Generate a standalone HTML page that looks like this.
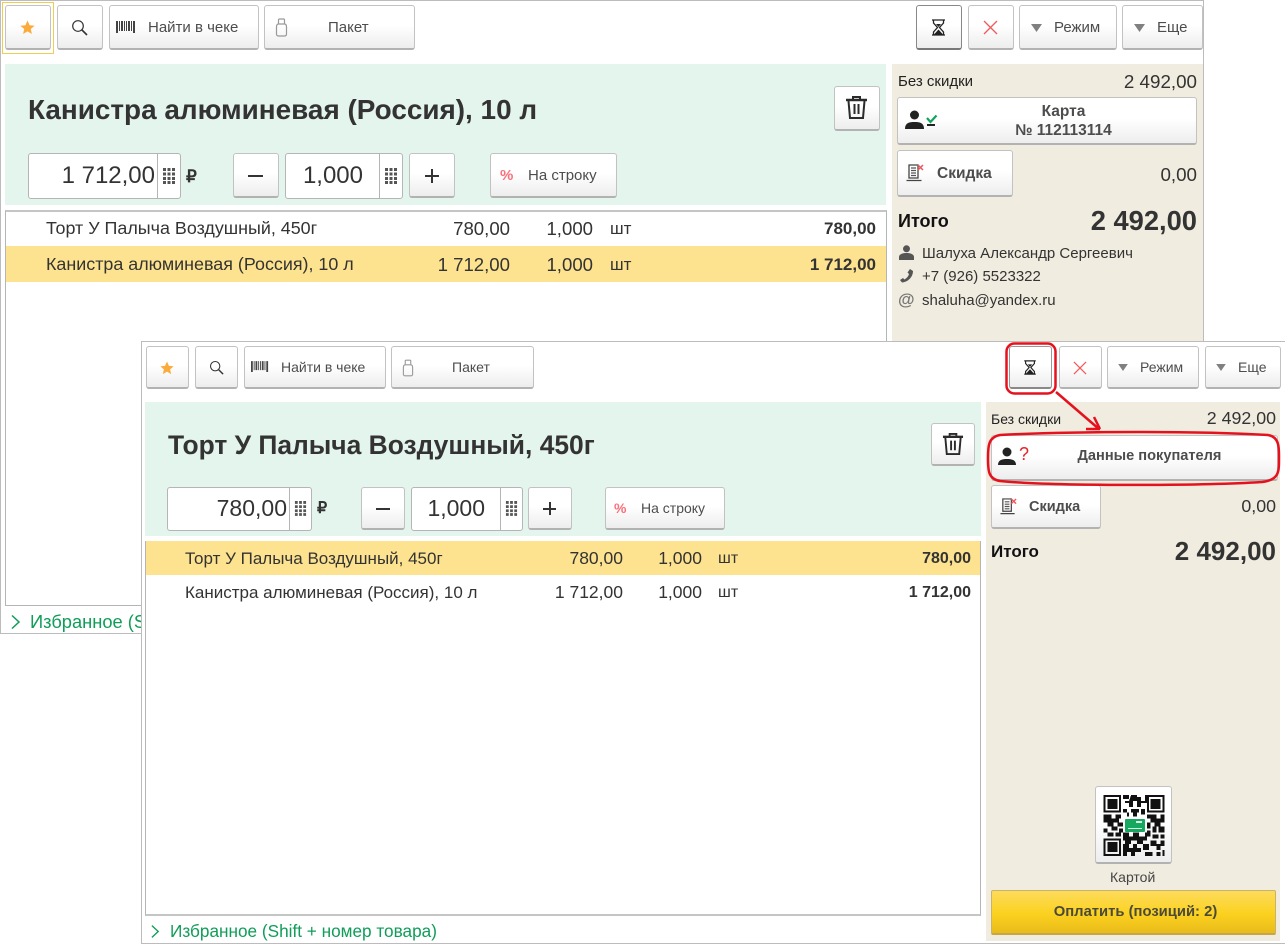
<!DOCTYPE html>
<html><head><meta charset="utf-8">
<style>
html,body{margin:0;padding:0;background:#fff;width:1285px;height:945px;overflow:hidden}
body{font-family:"Liberation Sans",sans-serif;color:#333;position:relative}
#w{position:absolute;left:0;top:0;width:1285px;height:945px;filter:blur(.3px)}
.a{position:absolute;white-space:nowrap;line-height:1}
.b{position:absolute;box-sizing:border-box;border:1px solid #c2c2c2;border-bottom:2px solid #b2b2b2;border-radius:3px;background:linear-gradient(#fff 0%,#fff 45%,#ededed 100%)}
.t{position:absolute;white-space:nowrap;line-height:1;color:#4d4d4d}
.i{position:absolute;box-sizing:border-box;background:#fff;border:1px solid #b5b5b5;border-radius:3px}
svg{position:absolute;overflow:visible}
.r{text-align:right}
.bd{font-weight:bold}
</style></head><body><div id="w">

<!-- WINDOW 1 -->
<div style="position:absolute;left:0;top:0;width:1204px;height:634px;box-sizing:border-box;border:1px solid #bcbcbc;background:#fff"></div>
<div style="position:absolute;left:2px;top:2px;width:52px;height:52px;box-sizing:border-box;border:1px solid #f0cc55"></div>
<div class="b" style="left:5px;top:5px;width:46px;height:45px"></div>
<svg style="left:20px;top:20px" width="15" height="15" viewBox="0 0 15 15"><path d="M7.5 0.5l2.1 4.7 5 .5-3.8 3.3 1.1 5-4.4-2.6-4.4 2.6 1.1-5L.4 5.7l5-.5z" fill="#fbaa3c"/></svg>
<div class="b" style="left:57px;top:5px;width:46px;height:45px"></div>
<svg style="left:71px;top:19px" width="17" height="17" viewBox="0 0 17 17" fill="none" stroke="#333"><circle cx="7" cy="7" r="5.3" stroke-width="1.2"/><path d="M11 11l5 5" stroke-width="1.6"/></svg>
<div class="b" style="left:109px;top:5px;width:150px;height:45px"></div>
<svg style="left:116px;top:21px" width="20" height="13" viewBox="0 0 20 13" fill="#444"><path d="M0 0h2v12H0zM3 0h1v10H3zM5 0h2v10H5zM8 0h1v10H8zM10 0h1v10h-1zM12 0h2v10h-2zM15 0h1v10h-1zM17 0h2v12h-2z"/></svg>
<div class="t" style="left:148px;top:20px;font-size:15px">Найти в чеке</div>
<div class="b" style="left:264px;top:5px;width:151px;height:45px"></div>
<svg style="left:275px;top:18px" width="13" height="19" viewBox="0 0 13 19" fill="none" stroke="#999" stroke-width="1.2"><path d="M1.500 9q0-3 2-3h6q2 0 2 3v7q0 2-2 2h-6q-2 0-2-2zM3.500 6V2q0-1 1-1h4q1 0 1 1v4"/></svg>
<div class="t" style="left:328px;top:20px;font-size:15px">Пакет</div>

<div class="b" style="left:916px;top:5px;width:46px;height:45px;border-color:#888;border-bottom-color:#777"></div>
<svg style="left:931px;top:19px" width="15" height="17" viewBox="0 0 15 17"><path d="M1 1h13M1 16h13M2.500 1v3l4 4.500-4 4.500v3M12.500 1v3l-4 4.500 4 4.500v3" fill="none" stroke="#222" stroke-width="1.300"/><path d="M3 15.500l4.500-5 4.500 5zM5 5h5l-2.500 3z" fill="#222"/></svg>
<div class="b" style="left:968px;top:5px;width:46px;height:45px"></div>
<svg style="left:983px;top:20px" width="15" height="15" viewBox="0 0 15 15"><path d="M1 1l13 13M14 1L1 14" stroke="#ef5a5a" stroke-width="1.300"/></svg>
<div class="b" style="left:1019px;top:5px;width:98px;height:45px"></div>
<svg style="left:1031px;top:24px" width="11" height="8" viewBox="0 0 11 8"><path d="M0 0h11L5.500 8z" fill="#808080"/></svg>
<div class="t" style="left:1054px;top:20px;font-size:15px">Режим</div>
<div class="b" style="left:1122px;top:5px;width:81px;height:45px"></div>
<svg style="left:1134px;top:24px" width="11" height="8" viewBox="0 0 11 8"><path d="M0 0h11L5.500 8z" fill="#808080"/></svg>
<div class="t" style="left:1157px;top:20px;font-size:15px">Еще</div>

<div style="position:absolute;left:5px;top:64px;width:881px;height:141px;background:#e4f5ed"></div>
<div class="a bd" style="left:28px;top:96px;font-size:27.9px">Канистра алюминевая (Россия), 10 л</div>
<div class="b" style="left:834px;top:86px;width:46px;height:45px"></div>
<svg style="left:845px;top:96px" width="23" height="24" viewBox="0 0 23 24" fill="none" stroke="#2b2b2b"><path d="M1 4h21" stroke-width="2.500"/><path d="M8 3V1h7v2" stroke-width="2"/><path d="M3.500 5l1.500 17h13l1.500-17" stroke-width="2"/><path d="M9.500 8v10M13.500 8v10" stroke-width="2"/></svg>

<div class="i" style="left:28px;top:153px;width:153px;height:46px"></div>
<div style="position:absolute;left:157px;top:153px;width:1px;height:46px;background:#b5b5b5"></div>
<div class="a r" style="left:28px;width:127px;top:164px;font-size:24px">1 712,00</div>
<svg style="left:162px;top:167px" width="14" height="17" viewBox="0 0 14 17" fill="#555"><path d="M1 1h3v3H1zM5.500 1h3v3h-3zM10 1h3v3h-3zM1 5.500h3v3H1zM5.500 5.500h3v3h-3zM10 5.500h3v3h-3zM1 10h3v3H1zM5.500 10h3v3h-3zM10 10h3v3h-3zM1 14h3v3H1zM5.500 14h3v3h-3zM10 14h3v3h-3z"/></svg>
<div class="a bd" style="left:186px;top:168px;font-size:17px">₽</div>
<div class="b" style="left:233px;top:153px;width:46px;height:45px"></div>
<div style="position:absolute;left:248px;top:175px;width:15px;height:2px;background:#333"></div>
<div class="i" style="left:285px;top:153px;width:118px;height:46px"></div>
<div style="position:absolute;left:379px;top:153px;width:1px;height:46px;background:#b5b5b5"></div>
<div class="a r" style="left:285px;width:78px;top:164px;font-size:24px">1,000</div>
<svg style="left:384px;top:167px" width="14" height="17" viewBox="0 0 14 17" fill="#555"><path d="M1 1h3v3H1zM5.500 1h3v3h-3zM10 1h3v3h-3zM1 5.500h3v3H1zM5.500 5.500h3v3h-3zM10 5.500h3v3h-3zM1 10h3v3H1zM5.500 10h3v3h-3zM10 10h3v3h-3zM1 14h3v3H1zM5.500 14h3v3h-3zM10 14h3v3h-3z"/></svg>
<div class="b" style="left:409px;top:153px;width:46px;height:45px"></div>
<div style="position:absolute;left:425px;top:175px;width:14px;height:2px;background:#333"></div>
<div style="position:absolute;left:431px;top:169px;width:2px;height:14px;background:#333"></div>
<div class="b" style="left:490px;top:153px;width:127px;height:45px"></div>
<div class="a bd" style="left:500px;top:168px;font-size:15px;color:#fb6f7b">%</div>
<div class="t" style="left:528px;top:168px;font-size:15px">На строку</div>

<div style="position:absolute;left:5px;top:210px;width:882px;height:396px;box-sizing:border-box;border:1px solid #b5b5b5;border-top:2px solid #c5c5c5;background:#fff"></div>
<div style="position:absolute;left:6px;top:246px;width:880px;height:36px;background:#fde38f"></div>
<div class="a" style="left:46px;top:220px;font-size:17.9px">Торт У Палыча Воздушный, 450г</div>
<div class="a r" style="left:380px;width:130px;top:220px;font-size:18.6px">780,00</div>
<div class="a r" style="left:500px;width:93px;top:220px;font-size:18.6px">1,000</div>
<div class="a" style="left:610px;top:220px;font-size:17px">шт</div>
<div class="a r bd" style="left:740px;width:136px;top:220px;font-size:17px">780,00</div>
<div class="a" style="left:46px;top:256px;font-size:17.9px">Канистра алюминевая (Россия), 10 л</div>
<div class="a r" style="left:380px;width:130px;top:256px;font-size:18.6px">1 712,00</div>
<div class="a r" style="left:500px;width:93px;top:256px;font-size:18.6px">1,000</div>
<div class="a" style="left:610px;top:256px;font-size:17px">шт</div>
<div class="a r bd" style="left:740px;width:136px;top:256px;font-size:17px">1 712,00</div>

<svg style="left:11px;top:614px" width="10" height="16" viewBox="0 0 10 16"><path d="M1 1.500l7 6.500-7 6.500" fill="none" stroke="#0f9d58" stroke-width="1.500"/></svg>
<div class="a" style="left:30px;top:613px;font-size:18.3px;color:#0f9d58">Избранное (Shift</div>

<div style="position:absolute;left:892px;top:64px;width:311px;height:278px;background:#f1ece0"></div>
<div class="a" style="left:898px;top:74px;font-size:15px;color:#222">Без скидки</div>
<div class="a r" style="left:1050px;width:147px;top:73px;font-size:18.8px">2 492,00</div>
<div class="b" style="left:897px;top:97px;width:300px;height:48px"></div>
<svg style="left:905px;top:110px" width="34" height="21" viewBox="0 0 34 21"><circle cx="9.500" cy="5" r="4.500" fill="#222"/><path d="M0 19c0-6 4-7 9.500-7s9.500 1 9.500 7z" fill="#222"/><path d="M22 8l3.500 4 6-6.500" fill="none" stroke="#0fa45b" stroke-width="2.200"/><path d="M22 15h8" stroke="#222" stroke-width="2"/></svg>
<div class="t bd" style="left:945px;width:237px;text-align:center;top:104px;font-size:15.5px">Карта</div>
<div class="t bd" style="left:945px;width:237px;text-align:center;top:123px;font-size:15.5px">№ 112113114</div>
<div class="b" style="left:897px;top:150px;width:116px;height:47px"></div>
<svg style="left:906px;top:164px" width="18" height="18" viewBox="0 0 18 18"><path d="M3 1h9v13H3zM0.500 16.500h15" fill="none" stroke="#444" stroke-width="1.300"/><path d="M5 4h5M5 6.500h5M5 9h5M5 11.500h5" stroke="#555" stroke-width="1.200"/><path d="M12 1l5 5M17 1l-5 5" stroke="#f0565f" stroke-width="1.500"/></svg>
<div class="t bd" style="left:937px;top:166px;font-size:15.5px">Скидка</div>
<div class="a r" style="left:1050px;width:147px;top:166px;font-size:18.8px">0,00</div>
<div class="a bd" style="left:898px;top:212px;font-size:18px;color:#111">Итого</div>
<div class="a r bd" style="left:1000px;width:197px;top:207px;font-size:27.3px">2 492,00</div>
<svg style="left:899px;top:245px" width="15" height="15" viewBox="0 0 15 15"><circle cx="7.500" cy="3.800" r="3.500" fill="#555"/><path d="M0 15v-3c0-3 4-4 7.500-4s7.500 1 7.500 4v3z" fill="#555"/></svg>
<div class="a" style="left:922px;top:246px;font-size:15px">Шалуха Александр Сергеевич</div>
<svg style="left:899px;top:268px" width="15" height="15" viewBox="0 0 15 15"><path d="M11 1l3 2c0 6-5 11-11 11.500L1 12l3-2 1.500 1.500C8 10 9.500 8 10 6L8.500 4.500z" fill="#555"/></svg>
<div class="a" style="left:922px;top:269px;font-size:15px">+7 (926) 5523322</div>
<div class="a bd" style="left:898px;top:291px;font-size:17px;color:#777">@</div>
<div class="a" style="left:922px;top:293px;font-size:15px">shaluha@yandex.ru</div>

<!-- WINDOW 2 -->
<div style="position:absolute;left:141px;top:341px;width:1144px;height:603px;box-sizing:border-box;border:1px solid #bcbcbc;border-right:none;background:#fff"></div>
<div class="b" style="left:146px;top:346px;width:43px;height:43px"></div>
<svg style="left:160px;top:361px" width="14" height="14" viewBox="0 0 15 15"><path d="M7.500 0.500l2.100 4.700 5 .5-3.800 3.300 1.100 5-4.400-2.600-4.400 2.600 1.100-5L.4 5.700l5-.5z" fill="#fbaa3c"/></svg>
<div class="b" style="left:195px;top:346px;width:43px;height:43px"></div>
<svg style="left:209px;top:360px" width="15" height="15" viewBox="0 0 17 17" fill="none" stroke="#333"><circle cx="7" cy="7" r="5.300" stroke-width="1.200"/><path d="M11 11l5 5" stroke-width="1.600"/></svg>
<div class="b" style="left:244px;top:346px;width:142px;height:43px"></div>
<svg style="left:251px;top:361px" width="18" height="12" viewBox="0 0 20 13" fill="#444"><path d="M0 0h2v12H0zM3 0h1v10H3zM5 0h2v10H5zM8 0h1v10H8zM10 0h1v10h-1zM12 0h2v10h-2zM15 0h1v10h-1zM17 0h2v12h-2z"/></svg>
<div class="t" style="left:281px;top:360px;font-size:14px">Найти в чеке</div>
<div class="b" style="left:391px;top:346px;width:143px;height:43px"></div>
<svg style="left:402px;top:359px" width="12" height="18" viewBox="0 0 13 19" fill="none" stroke="#999" stroke-width="1.200"><path d="M1.500 9q0-3 2-3h6q2 0 2 3v7q0 2-2 2h-6q-2 0-2-2zM3.500 6V2q0-1 1-1h4q1 0 1 1v4"/></svg>
<div class="t" style="left:452px;top:360px;font-size:14px">Пакет</div>
<div class="b" style="left:1009px;top:346px;width:43px;height:43px;border-color:#999;border-bottom-color:#888"></div>
<svg style="left:1023px;top:360px" width="14" height="15" viewBox="0 0 15 17"><path d="M1 1h13M1 16h13M2.500 1v3l4 4.500-4 4.500v3M12.500 1v3l-4 4.500 4 4.500v3" fill="none" stroke="#222" stroke-width="1.300"/><path d="M3 15.500l4.500-5 4.500 5zM5 5h5l-2.500 3z" fill="#222"/></svg>
<div class="b" style="left:1059px;top:346px;width:43px;height:43px"></div>
<svg style="left:1073px;top:361px" width="14" height="14" viewBox="0 0 15 15"><path d="M1 1l13 13M14 1L1 14" stroke="#ef5a5a" stroke-width="1.300"/></svg>
<div class="b" style="left:1107px;top:346px;width:92px;height:43px"></div>
<svg style="left:1118px;top:364px" width="10" height="7" viewBox="0 0 11 8"><path d="M0 0h11L5.500 8z" fill="#808080"/></svg>
<div class="t" style="left:1140px;top:360px;font-size:14px">Режим</div>
<div class="b" style="left:1205px;top:346px;width:76px;height:43px"></div>
<svg style="left:1216px;top:364px" width="10" height="7" viewBox="0 0 11 8"><path d="M0 0h11L5.500 8z" fill="#808080"/></svg>
<div class="t" style="left:1238px;top:360px;font-size:14px">Еще</div>

<div style="position:absolute;left:145px;top:402px;width:836px;height:134px;background:#e4f5ed"></div>
<div class="a bd" style="left:168px;top:432px;font-size:26.4px">Торт У Палыча Воздушный, 450г</div>
<div class="b" style="left:931px;top:423px;width:44px;height:43px"></div>
<svg style="left:942px;top:433px" width="22" height="23" viewBox="0 0 23 24" fill="none" stroke="#2b2b2b"><path d="M1 4h21" stroke-width="2.500"/><path d="M8 3V1h7v2" stroke-width="2"/><path d="M3.500 5l1.500 17h13l1.500-17" stroke-width="2"/><path d="M9.500 8v10M13.500 8v10" stroke-width="2"/></svg>

<div class="i" style="left:167px;top:487px;width:145px;height:44px"></div>
<div style="position:absolute;left:289px;top:487px;width:1px;height:44px;background:#b5b5b5"></div>
<div class="a r" style="left:167px;width:120px;top:497px;font-size:23px">780,00</div>
<svg style="left:294px;top:500px" width="13" height="16" viewBox="0 0 14 17" fill="#555"><path d="M1 1h3v3H1zM5.500 1h3v3h-3zM10 1h3v3h-3zM1 5.500h3v3H1zM5.500 5.500h3v3h-3zM10 5.500h3v3h-3zM1 10h3v3H1zM5.500 10h3v3h-3zM10 10h3v3h-3zM1 14h3v3H1zM5.500 14h3v3h-3zM10 14h3v3h-3z"/></svg>
<div class="a bd" style="left:317px;top:501px;font-size:16px">₽</div>
<div class="b" style="left:361px;top:487px;width:44px;height:43px"></div>
<div style="position:absolute;left:376px;top:508px;width:14px;height:2px;background:#333"></div>
<div class="i" style="left:411px;top:487px;width:112px;height:44px"></div>
<div style="position:absolute;left:500px;top:487px;width:1px;height:44px;background:#b5b5b5"></div>
<div class="a r" style="left:411px;width:74px;top:497px;font-size:23px">1,000</div>
<svg style="left:505px;top:500px" width="13" height="16" viewBox="0 0 14 17" fill="#555"><path d="M1 1h3v3H1zM5.500 1h3v3h-3zM10 1h3v3h-3zM1 5.500h3v3H1zM5.500 5.500h3v3h-3zM10 5.500h3v3h-3zM1 10h3v3H1zM5.500 10h3v3h-3zM10 10h3v3h-3zM1 14h3v3H1zM5.500 14h3v3h-3zM10 14h3v3h-3z"/></svg>
<div class="b" style="left:528px;top:487px;width:44px;height:43px"></div>
<div style="position:absolute;left:543px;top:508px;width:13px;height:2px;background:#333"></div>
<div style="position:absolute;left:549px;top:502px;width:2px;height:13px;background:#333"></div>
<div class="b" style="left:605px;top:487px;width:120px;height:43px"></div>
<div class="a bd" style="left:614px;top:501px;font-size:14px;color:#fb6f7b">%</div>
<div class="t" style="left:641px;top:501px;font-size:14px">На строку</div>

<div style="position:absolute;left:145px;top:541px;width:836px;height:375px;box-sizing:border-box;border:1px solid #b5b5b5;border-bottom:2px solid #c5c5c5;background:#fff"></div>
<div style="position:absolute;left:146px;top:541px;width:834px;height:34px;background:#fde38f"></div>
<div class="a" style="left:185px;top:550px;font-size:17px">Торт У Палыча Воздушный, 450г</div>
<div class="a r" style="left:500px;width:123px;top:550px;font-size:17.5px">780,00</div>
<div class="a r" style="left:600px;width:102px;top:550px;font-size:17.5px">1,000</div>
<div class="a" style="left:718px;top:551px;font-size:16px">шт</div>
<div class="a r bd" style="left:840px;width:131px;top:551px;font-size:16px">780,00</div>
<div class="a" style="left:185px;top:584px;font-size:17px">Канистра алюминевая (Россия), 10 л</div>
<div class="a r" style="left:500px;width:123px;top:584px;font-size:17.5px">1 712,00</div>
<div class="a r" style="left:600px;width:102px;top:584px;font-size:17.5px">1,000</div>
<div class="a" style="left:718px;top:585px;font-size:16px">шт</div>
<div class="a r bd" style="left:840px;width:131px;top:585px;font-size:16px">1 712,00</div>

<svg style="left:151px;top:924px" width="9" height="15" viewBox="0 0 10 16"><path d="M1 1.500l7 6.500-7 6.500" fill="none" stroke="#0f9d58" stroke-width="1.500"/></svg>
<div class="a" style="left:170px;top:923px;font-size:17.2px;color:#0f9d58">Избранное (Shift + номер товара)</div>

<div style="position:absolute;left:986px;top:402px;width:294px;height:539px;background:#f1ece0"></div>
<div class="a" style="left:991px;top:412px;font-size:14px;color:#222">Без скидки</div>
<div class="a r" style="left:1130px;width:146px;top:410px;font-size:17.8px">2 492,00</div>
<div class="b" style="left:991px;top:435px;width:287px;height:46px"></div>
<svg style="left:998px;top:445px" width="32" height="22" viewBox="0 0 32 22"><circle cx="9" cy="7" r="4.500" fill="#222"/><path d="M0 20c0-5 4-6 9-6s9 1 9 6z" fill="#222"/></svg>
<div class="a" style="left:1019px;top:445px;font-size:18px;color:#e8212b">?</div>
<div class="t bd" style="left:1030px;width:239px;text-align:center;top:449px;font-size:14.6px">Данные покупателя</div>
<div class="b" style="left:991px;top:485px;width:110px;height:44px"></div>
<svg style="left:1000px;top:498px" width="17" height="17" viewBox="0 0 18 18"><path d="M3 1h9v13H3zM0.500 16.500h15" fill="none" stroke="#444" stroke-width="1.300"/><path d="M5 4h5M5 6.500h5M5 9h5M5 11.500h5" stroke="#555" stroke-width="1.200"/><path d="M12 1l5 5M17 1l-5 5" stroke="#f0565f" stroke-width="1.500"/></svg>
<div class="t bd" style="left:1029px;top:500px;font-size:14.5px">Скидка</div>
<div class="a r" style="left:1130px;width:146px;top:498px;font-size:17.8px">0,00</div>
<div class="a bd" style="left:991px;top:543px;font-size:17px;color:#111">Итого</div>
<div class="a r bd" style="left:1080px;width:196px;top:538px;font-size:26px">2 492,00</div>

<div class="b" style="left:1095px;top:786px;width:77px;height:78px"></div>
<svg style="left:1103px;top:795px" width="62" height="61" viewBox="0 0 31 31" shape-rendering="crispEdges" fill="#111">
<path d="M0 0h9v9H0zM1 1v7h7V1zM2 2h5v5H2zM22 0h9v9h-9zM23 1v7h7V1zM24 2h5v5h-5zM0 22h9v9H0zM1 23v7h7v-7zM2 24h5v5H2z" fill-rule="evenodd"/>
<path d="M10 0h3v2h-3zM14 0h3v1h2v2h2V0h1v4h-3v2h-2V3h-2v3h-2V4h-2V3h2zM10 7h2v2h-2zM14 7h4v2h-4zM19 7h2v3h-2zM12 9h1v2h-1zM15 9h2v2h-2z"/>
<path d="M0 10h4v2h2v-2h3v2H8v2h2v2H7v-2H5v2h2v2H4v-2H2v-2H0zM0 17h2v2h3v2H2v-2H0zM6 19h3v2H6zM8 17h2v2H8z"/>
<path d="M22 10h5v2h2v-2h2v4h-2v2h2v3h-3v-3h-2v-2h-2v-2h-2zM22 14h2v3h-2zM25 16h2v3h-2zM22 18h2v3h-2zM25 20h3v2h-3zM29 20h2v2h-2z"/>
<path d="M10 19h3v2h2v-2h3v2h3v-2h1v4h-2v2h-3v-2h-3v2h-3v-2h-1zM10 25h3v2h2v-2h2v2h2v2h-3v2h-2v-2h-2v2h-2zM20 25h3v3h-3zM24 23h3v2h2v-2h2v3h-2v2h-2v-2h-3zM21 29h4v2h-4zM27 29h2v2h-2zM30 28h1v3h-1z"/>
<rect x="10.500" y="11" width="11" height="8" fill="#fff"/>
</svg>
<div style="position:absolute;left:1125px;top:819px;width:20px;height:13px;background:#17a85f;border-radius:1px"></div>
<div style="position:absolute;left:1136px;top:821px;width:6px;height:2px;background:#d9f2e5"></div>
<div style="position:absolute;left:1128px;top:828px;width:14px;height:1px;background:#d9f2e5"></div>
<div class="a" style="left:1110px;top:870px;font-size:14px;color:#444">Картой</div>
<div style="position:absolute;box-sizing:border-box;left:991px;top:890px;width:285px;height:45px;border:1px solid #c9b36a;border-bottom:2px solid #c5a64a;border-radius:2px;background:linear-gradient(#fddb5c 0%,#fbd11f 55%,#e9bb1a 100%)"></div>
<div class="a bd" style="left:993px;width:285px;text-align:center;top:905px;font-size:14.8px;color:#4a4a3a">Оплатить (позиций: 2)</div>

<!-- RED ANNOTATIONS -->
<svg style="left:0;top:0" width="1285" height="945" viewBox="0 0 1285 945" fill="none" stroke="#e5121e" stroke-width="2.500">
<rect x="1006.500" y="343.500" width="49" height="50" rx="8"/>
<path d="M1056 392L1099 429M1094 417l6 12M1086 429h14"/>
<path d="M1000 435C1080 431 1200 431 1268 435C1280 437 1279 449 1279 459C1279 472 1279 480 1262 482C1200 486 1050 486 1000 481C988 479 988 470 988 458C988 447 988 437 1000 435Z"/>
</svg>
</div></body></html>
